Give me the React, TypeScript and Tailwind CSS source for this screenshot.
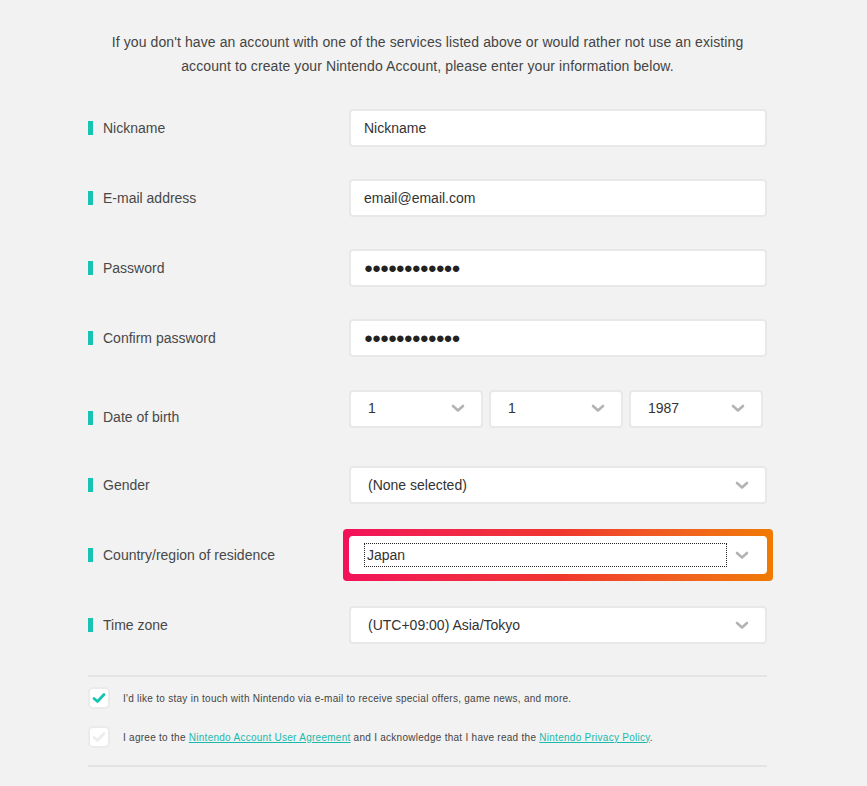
import React from 'react';

const font = { fontFamily: '"Liberation Sans", Arial, sans-serif' };

const Chevron: React.FC = () => (
  <svg width="14" height="9" viewBox="0 0 14 9" className="shrink-0">
    <path d="M2 2 L7 6.5 L12 2" fill="none" stroke="#b3b3b3" strokeWidth="2.6" strokeLinecap="round" strokeLinejoin="round" />
  </svg>
);

const Label: React.FC<{ text: string; className?: string }> = ({ text, className = '' }) => (
  <div className={`flex items-center w-[261px] shrink-0 ${className}`}>
    <span className="w-[5px] h-[14px] bg-[#17c4b1] mr-[10px]" />
    <span className="text-[14px] text-[#484848]">{text}</span>
  </div>
);

const TextBox: React.FC<{ value: string; dots?: boolean }> = ({ value, dots }) => (
  <div className="flex-1 h-[38px] bg-white border-2 border-[#e8e8e8] rounded-[4px] flex items-center pl-[13px]">
    {dots ? (
      <span className="text-[15px] text-[#222] tracking-[-1.1px]">{value}</span>
    ) : (
      <span className="text-[14px] text-[#333]">{value}</span>
    )}
  </div>
);

const Select: React.FC<{ value: string; className?: string; focused?: boolean }> = ({ value, className = '', focused }) => (
  <div className={`h-[38px] bg-white border-2 border-[#e8e8e8] rounded-[4px] flex items-center justify-between pr-[16px] ${focused ? 'pl-[13px] border-white' : 'pl-[17px]'} ${className}`}>
    {focused ? (
      <span className="flex-1 mr-[8px] h-[24px] border border-dotted border-[#222] flex items-center pl-[2px] text-[14px] text-[#333]">{value}</span>
    ) : (
      <span className="text-[14px] text-[#333]">{value}</span>
    )}
    <Chevron />
  </div>
);

const Check: React.FC<{ on?: boolean }> = ({ on }) => (
  <div className="w-[22px] h-[22px] bg-white border-2 border-[#ebebeb] rounded-[5px] flex items-center justify-center shrink-0">
    <svg width="14" height="12" viewBox="0 0 14 12">
      <path d="M2 6.5 L5.5 9.5 L12 2.5" fill="none" stroke={on ? '#17c4b1' : '#ededed'} strokeWidth="2.8" strokeLinecap="round" strokeLinejoin="round" />
    </svg>
  </div>
);

const App: React.FC = () => {
  return (
    <div className="w-[867px] h-[786px] bg-[#f2f2f2] overflow-hidden" style={font}>
      <div className="w-[679px] ml-[88px] pt-[30px]">
        <p className="text-center text-[14px] leading-[24px] text-[#444] tracking-[0.1px]">
          If you don't have an account with one of the services listed above or would rather not use an existing
          <br />
          account to create your Nintendo Account, please enter your information below.
        </p>

        <div className="mt-[31px] flex flex-col">
          <div className="flex items-center">
            <Label text="Nickname" />
            <TextBox value="Nickname" />
          </div>
          <div className="flex items-center mt-[32px]">
            <Label text="E-mail address" />
            <TextBox value="email@email.com" />
          </div>
          <div className="flex items-center mt-[32px]">
            <Label text="Password" />
            <TextBox value="●●●●●●●●●●●●" dots />
          </div>
          <div className="flex items-center mt-[32px]">
            <Label text="Confirm password" />
            <TextBox value="●●●●●●●●●●●●" dots />
          </div>
          <div className="flex items-center mt-[32px]">
            <Label text="Date of birth" className="pt-[18px]" />
            <div className="flex gap-[6px]">
              <Select value="1" className="w-[134px]" />
              <Select value="1" className="w-[134px]" />
              <Select value="1987" className="w-[134px]" />
            </div>
          </div>
          <div className="flex items-center mt-[38px]">
            <Label text="Gender" />
            <Select value="(None selected)" className="flex-1" />
          </div>
          <div className="flex items-center mt-[32px]">
            <Label text="Country/region of residence" />
            <div className="flex-1 -mx-[6px] -my-[7px] px-[6px] py-[7px] rounded-[4px] bg-gradient-to-r from-[#f2105a] via-[#f0352e] to-[#f07a00]">
              <Select value="Japan" className="w-full" focused />
            </div>
          </div>
          <div className="flex items-center mt-[32px]">
            <Label text="Time zone" />
            <Select value="(UTC+09:00) Asia/Tokyo" className="flex-1" />
          </div>
        </div>

        <div className="mt-[31px] h-[2px] bg-[#e4e4e4]" />
        <div className="pt-[10px] pb-[17px] flex flex-col gap-[17px] text-[10px] text-[#444] tracking-[0.27px]">
          <div className="flex items-center gap-[13px]">
            <Check on />
            <span>I'd like to stay in touch with Nintendo via e-mail to receive special offers, game news, and more.</span>
          </div>
          <div className="flex items-center gap-[13px]">
            <Check />
            <span>
              I agree to the <span className="text-[#1ab9ac] underline">Nintendo Account User Agreement</span> and I acknowledge that I have read the{' '}
              <span className="text-[#1ab9ac] underline">Nintendo Privacy Policy</span>.
            </span>
          </div>
        </div>
        <div className="h-[2px] bg-[#e4e4e4]" />
      </div>
    </div>
  );
};

export default App;
